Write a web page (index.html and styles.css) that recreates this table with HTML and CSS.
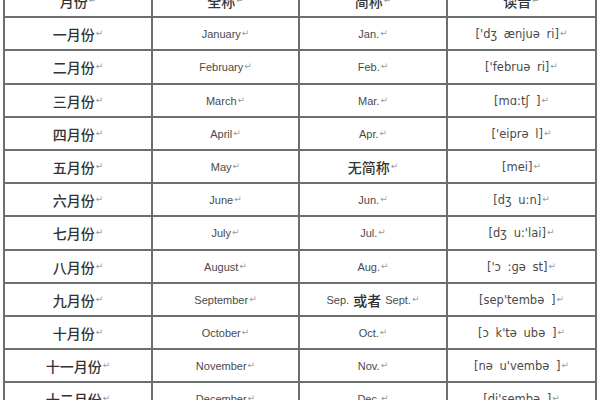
FILE: index.html
```html
<!DOCTYPE html>
<html lang="zh">
<head>
<meta charset="utf-8">
<link rel="stylesheet" href="styles.css">
</head>
<body>
<div class="table">
  <div class="cell zh">月份<span class="ret">↵</span></div>
  <div class="cell zh">全称<span class="ret">↵</span></div>
  <div class="cell zh">简称<span class="ret">↵</span></div>
  <div class="cell zh">读音<span class="ret">↵</span></div>

  <div class="cell zh">一月份<span class="ret">↵</span></div>
  <div class="cell en">January<span class="ret">↵</span></div>
  <div class="cell en">Jan.<span class="ret">↵</span></div>
  <div class="cell en ipa">['dʒ ænjuə ri]<span class="ret">↵</span></div>

  <div class="cell zh">二月份<span class="ret">↵</span></div>
  <div class="cell en">February<span class="ret">↵</span></div>
  <div class="cell en">Feb.<span class="ret">↵</span></div>
  <div class="cell en ipa">['februə ri]<span class="ret">↵</span></div>

  <div class="cell zh">三月份<span class="ret">↵</span></div>
  <div class="cell en">March<span class="ret">↵</span></div>
  <div class="cell en">Mar.<span class="ret">↵</span></div>
  <div class="cell en ipa">[mɑ:tʃ ]<span class="ret">↵</span></div>

  <div class="cell zh">四月份<span class="ret">↵</span></div>
  <div class="cell en">April<span class="ret">↵</span></div>
  <div class="cell en">Apr.<span class="ret">↵</span></div>
  <div class="cell en ipa">['eiprə l]<span class="ret">↵</span></div>

  <div class="cell zh">五月份<span class="ret">↵</span></div>
  <div class="cell en">May<span class="ret">↵</span></div>
  <div class="cell zh">无简称<span class="ret">↵</span></div>
  <div class="cell en ipa">[mei]<span class="ret">↵</span></div>

  <div class="cell zh">六月份<span class="ret">↵</span></div>
  <div class="cell en">June<span class="ret">↵</span></div>
  <div class="cell en">Jun.<span class="ret">↵</span></div>
  <div class="cell en ipa">[dʒ u:n]<span class="ret">↵</span></div>

  <div class="cell zh">七月份<span class="ret">↵</span></div>
  <div class="cell en">July<span class="ret">↵</span></div>
  <div class="cell en">Jul.<span class="ret">↵</span></div>
  <div class="cell en ipa">[dʒ u:'lai]<span class="ret">↵</span></div>

  <div class="cell zh">八月份<span class="ret">↵</span></div>
  <div class="cell en">August<span class="ret">↵</span></div>
  <div class="cell en">Aug.<span class="ret">↵</span></div>
  <div class="cell en ipa">['ɔ :ɡə st]<span class="ret">↵</span></div>

  <div class="cell zh">九月份<span class="ret">↵</span></div>
  <div class="cell en">September<span class="ret">↵</span></div>
  <div class="cell en">Sep. <span class="zhi">或者</span> Sept.<span class="ret">↵</span></div>
  <div class="cell en ipa">[sep'tembə ]<span class="ret">↵</span></div>

  <div class="cell zh">十月份<span class="ret">↵</span></div>
  <div class="cell en">October<span class="ret">↵</span></div>
  <div class="cell en">Oct.<span class="ret">↵</span></div>
  <div class="cell en ipa">[ɔ k'tə ubə ]<span class="ret">↵</span></div>

  <div class="cell zh">十一月份<span class="ret">↵</span></div>
  <div class="cell en">November<span class="ret">↵</span></div>
  <div class="cell en">Nov.<span class="ret">↵</span></div>
  <div class="cell en ipa">[nə u'vembə ]<span class="ret">↵</span></div>

  <div class="cell zh">十二月份<span class="ret">↵</span></div>
  <div class="cell en">December<span class="ret">↵</span></div>
  <div class="cell en">Dec.<span class="ret">↵</span></div>
  <div class="cell en ipa">[di'sembə ]<span class="ret">↵</span></div>
</div>
</body>
</html>
```

FILE: styles.css
```css
html, body {
  margin: 0;
  padding: 0;
  background: #ffffff;
  overflow: hidden;
}

body {
  width: 600px;
  height: 400px;
}

.table {
  display: grid;
  grid-template-columns: 148px 147px 148px 149px;
  grid-auto-rows: 33.2px;
  margin-left: 3px;
  margin-top: -15px;
  border-left: 2px solid #6e6e6e;
  width: max-content;
}

.cell {
  box-sizing: border-box;
  border-right: 2px solid #6e6e6e;
  border-bottom: 2px solid #6e6e6e;
  display: flex;
  align-items: center;
  justify-content: center;
  white-space: pre;
  padding-top: 1px;
}

.zh {
  font-family: "Noto Sans CJK SC", "Noto Sans", sans-serif;
  font-weight: 500;
  font-size: 14px;
  color: #333333;
}

.en {
  font-family: "Liberation Sans", "DejaVu Sans", sans-serif;
  font-size: 11px;
  color: #4a4a4a;
}

.ipa {
  font-family: "DejaVu Sans", "Liberation Sans", sans-serif;
  font-size: 11.5px;
  word-spacing: 3px;
  color: #4a4a4a;
}

.zhi {
  font-family: "Noto Sans CJK SC", sans-serif;
  font-weight: 500;
  font-size: 14px;
  color: #333333;
  margin: 0 1px;
}

.ret {
  font-family: "DejaVu Sans", sans-serif;
  font-size: 9px;
  font-weight: normal;
  word-spacing: 0;
  color: #9a9a9a;
  margin-left: 1px;
  position: relative;
  top: -1px;
}
```
